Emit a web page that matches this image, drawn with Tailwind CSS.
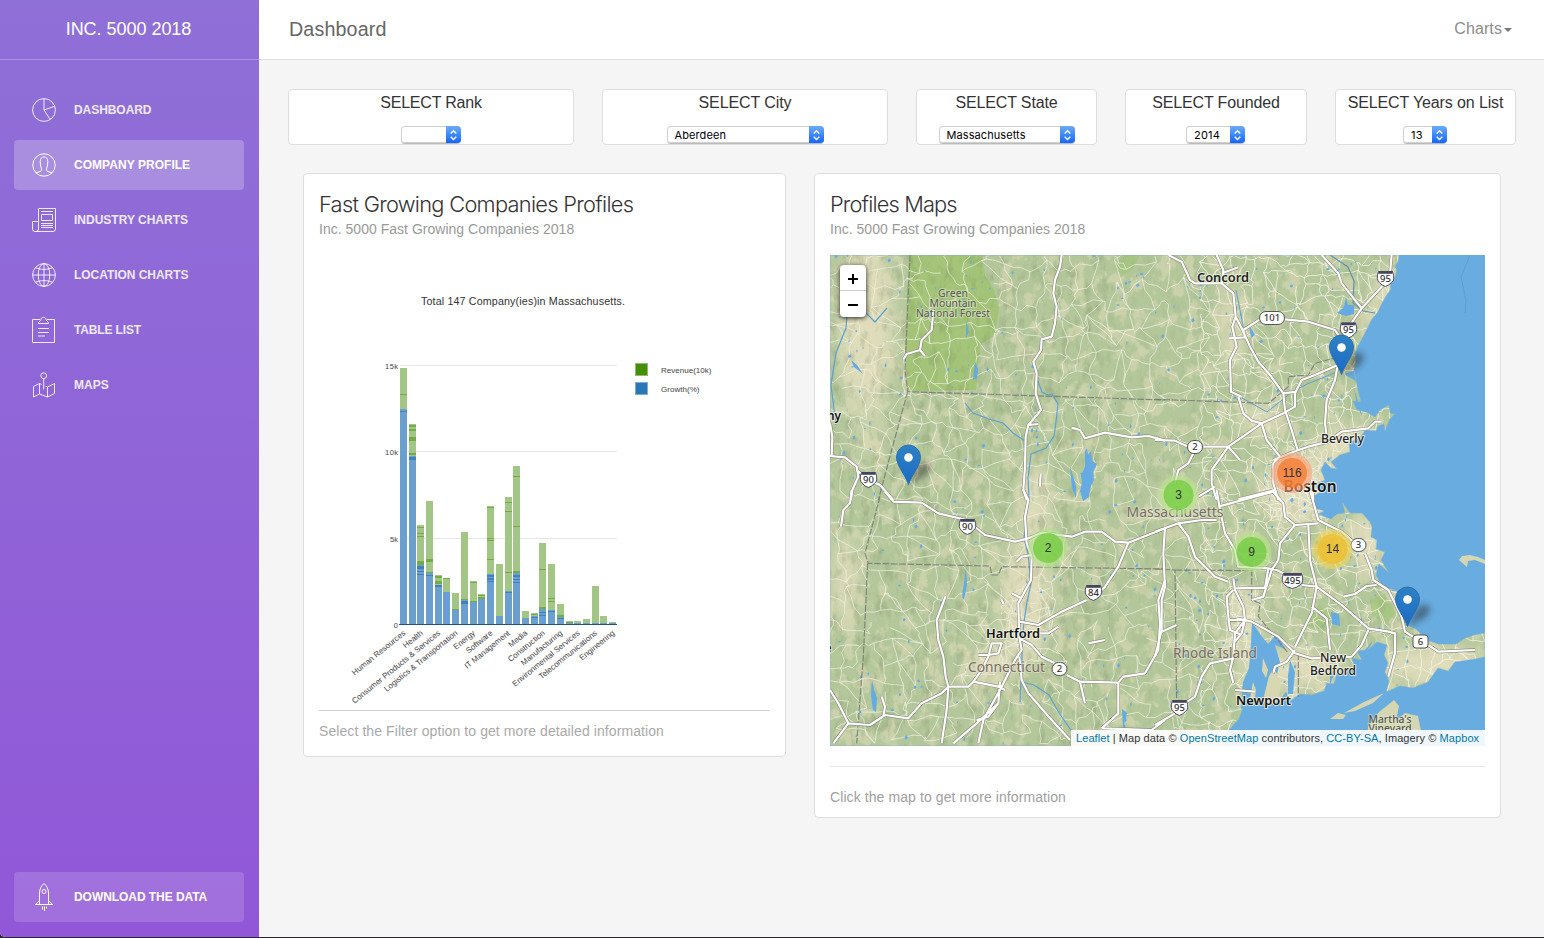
<!DOCTYPE html>
<html lang="en">
<head>
<meta charset="utf-8">
<title>Inc. 5000 2018 Dashboard</title>
<script src="https://cdn.jsdelivr.net/npm/@tailwindcss/browser@4"></script>
</head>
<body class="w-[1544px] h-[938px] overflow-hidden bg-[#2b2630] font-['Liberation_Sans',Arial,sans-serif] text-[#333]">
<div class="flex h-[937px] overflow-hidden rounded-bl-[5px] bg-[#f5f5f5]">

  <aside class="flex w-[259px] shrink-0 flex-col bg-linear-to-b from-[#8f70d7] to-[#9157d8] text-white">
    <div class="flex h-[60px] shrink-0 items-center justify-center border-b border-white/25 pr-[2px] text-[18px] tracking-[-0.030px]">INC. 5000 2018</div>
    <nav class="mt-[25px] flex flex-col gap-[5px] px-[14px] pr-[15px] text-[12px] font-bold">
      <a class="flex h-[50px] items-center rounded-[4px] pl-[17px] tracking-[-0.060px] text-white/85">
        <svg class="mr-[17px] h-[26px] w-[26px]" viewBox="0 0 26 26" fill="none" stroke="currentColor" stroke-width="1"><circle cx="13" cy="13" r="11.4"/><path d="M13 1.5V13l6.3 9.6M13 13l10.8-3.8"/></svg>DASHBOARD</a>
      <a class="flex h-[50px] items-center rounded-[4px] bg-white/23 pl-[17px] tracking-[0.040px] text-white">
        <svg class="mr-[17px] h-[26px] w-[26px]" viewBox="0 0 26 26" fill="none" stroke="currentColor" stroke-width="1"><circle cx="13" cy="13" r="11.2"/><path d="M4.800 20.800l4.300-1.300c1.500-.5 1.700-1.700 1.200-3.400-.8-2-1.200-4-1.100-6.600C9.300 6.400 10.700 4.900 13 4.900s3.700 1.500 3.800 4.600c.1 2.600-.3 4.600-1.100 6.600-.5 1.700-.3 2.900 1.200 3.400l4.300 1.300"/></svg>COMPANY PROFILE</a>
      <a class="flex h-[50px] items-center rounded-[4px] pl-[17px] text-white/85">
        <svg class="mr-[17px] h-[26px] w-[26px]" viewBox="0 0 26 26" fill="none" stroke="currentColor" stroke-width="1"><path d="M7.500 14.500V1.500h17v20.500q0 2.500-2.500 2.500H4q-2.500 0-2.500-2.500v-7.500h6v7.500q0 2.500-2.500 2.500M10 4.500h12M10.500 7.500h11v6h-11zM10 16.500h12M10 18.500h12M10 20.500h12"/></svg>INDUSTRY CHARTS</a>
      <a class="flex h-[50px] items-center rounded-[4px] pl-[17px] tracking-[-0.040px] text-white/85">
        <svg class="mr-[17px] h-[26px] w-[26px]" viewBox="0 0 26 26" fill="none" stroke="currentColor" stroke-width="1"><circle cx="13" cy="13" r="11.400"/><ellipse cx="13" cy="13" rx="5.800" ry="11.400"/><path d="M13 1.500v23M1.500 13h23M4.200 5.500c5 2.500 12.600 2.500 17.600 0M4.200 20.500c5-2.500 12.600-2.500 17.600 0"/></svg>LOCATION CHARTS</a>
      <a class="flex h-[50px] items-center rounded-[4px] pl-[17px] tracking-[-0.150px] text-white/85">
        <svg class="mr-[17px] h-[28px] w-[26px]" viewBox="0 0 26 28" fill="none" stroke="currentColor" stroke-width="1"><path d="M9 3.500H1.500v23h22v-23H16M7.500 7.500h10c0-2-2-2-2.500-4.200C14.700.7 10.300.7 10 3.300c-.5 2.200-2.500 2.200-2.500 4.200zM7 12.500h11M7 16.500h11M7 20h7"/></svg>TABLE LIST</a>
      <a class="flex h-[50px] items-center rounded-[4px] pl-[17px] text-white/85">
        <svg class="mr-[17px] h-[26px] w-[26px]" viewBox="0 0 26 26" fill="none" stroke="currentColor" stroke-width="1"><circle cx="12.700" cy="3.700" r="2.900"/><path d="M12.700 6.600v10.900M10.500 12.500l-2-1-6 3v10.500l6-3 8 3 7-3.500V11.500l-7 3.500-2-.8M8.500 11.500V22M16.500 15v10"/></svg>MAPS</a>
    </nav>
    <div class="mt-auto mb-[15px] ml-[14px] flex h-[50px] w-[230px] items-center rounded-[4px] bg-white/15 pl-[17px] text-[12px] font-bold tracking-[-0.060px]">
      <svg class="mr-[17px] h-[30px] w-[26px]" viewBox="0 0 26 30" fill="none" stroke="currentColor" stroke-width="1"><path d="M8.500 22.500V11c0-4 2-7.500 4.500-9.500 2.500 2 4.500 5.500 4.500 9.500v11.500M8.500 18.500l-4 4h17l-4-4M11.500 24.500v3M13.500 24.500v4.500M15.500 24.500v2"/><circle cx="13" cy="9.500" r="2"/></svg>DOWNLOAD THE DATA</div>
  </aside>

  <main class="flex-1">
    <header class="flex h-[60px] items-center justify-between border-b border-[#e0e0e0] bg-white pr-[32px] pl-[30px]">
      <h1 class="text-[19.700px] tracking-[0.140px] text-[#666]">Dashboard</h1>
      <div class="flex items-center gap-[2px] pb-[2px] text-[16px] tracking-[0.100px] text-[#8c8c8c]"><span>Charts</span><svg class="mt-[3px] h-[4px] w-[8px]" viewBox="0 0 8 4"><path d="M0 0h8L4 4z" fill="#777"/></svg></div>
    </header>

    <section class="mt-[29px] flex gap-[28px] pl-[29px] text-[16px] tracking-[-0.150px] [&>div]:flex [&>div]:h-[56px] [&>div]:flex-col [&>div]:items-center [&>div]:justify-between [&>div]:rounded-[4px] [&>div]:border [&>div]:border-[#dedede] [&>div]:bg-white [&>div]:whitespace-nowrap">
      <div class="w-[286px]"><span class="leading-[26px] tracking-[-0.200px]">SELECT Rank</span>
        <span class="flex h-[18px] w-[60px] justify-end overflow-hidden rounded-[4px] border-b border-[#bbb] shadow-[inset_0_0_0_1px_#d0d0d0]"><svg class="h-[18px] w-[15px]" viewBox="0 0 15 18"><use href="#stepper"/></svg></span></div>
      <div class="w-[286px]"><span class="leading-[26px] tracking-[-0.080px]">SELECT City</span>
        <span class="flex h-[18px] w-[157px] items-center justify-between overflow-hidden rounded-[4px] border-b border-[#bbb] pl-[8px] font-[Inter] text-[11px] tracking-[0.100px] text-black shadow-[inset_0_0_0_1px_#d0d0d0]"><b class="pt-[2px] font-normal">Aberdeen</b><svg class="h-[18px] w-[15px]" viewBox="0 0 15 18"><use href="#stepper"/></svg></span></div>
      <div class="w-[181px]"><span class="leading-[26px]">SELECT State</span>
        <span class="flex h-[18px] w-[136px] items-center justify-between overflow-hidden rounded-[4px] border-b border-[#bbb] pl-[8px] font-[Inter] text-[11px] tracking-[0.080px] text-black shadow-[inset_0_0_0_1px_#d0d0d0]"><b class="pt-[2px] font-normal">Massachusetts</b><svg class="h-[18px] w-[15px]" viewBox="0 0 15 18"><use href="#stepper"/></svg></span></div>
      <div class="w-[182px]"><span class="leading-[26px]">SELECT Founded</span>
        <span class="mr-[1px] flex h-[18px] w-[59px] items-center justify-between overflow-hidden rounded-[4px] border-b border-[#bbb] pl-[8px] font-[Inter] text-[11px] tracking-[0.200px] text-black shadow-[inset_0_0_0_1px_#d0d0d0]"><b class="pt-[2px] font-normal">2014</b><svg class="h-[18px] w-[15px]" viewBox="0 0 15 18"><use href="#stepper"/></svg></span></div>
      <div class="w-[181px]"><span class="leading-[26px] tracking-[-0.120px]">SELECT Years on List</span>
        <span class="mr-[1px] flex h-[18px] w-[44px] items-center justify-between overflow-hidden rounded-[4px] border-b border-[#bbb] pl-[8px] font-[Inter] text-[11px] tracking-[0.200px] text-black shadow-[inset_0_0_0_1px_#d0d0d0]"><b class="pt-[2px] font-normal">13</b><svg class="h-[18px] w-[15px]" viewBox="0 0 15 18"><use href="#stepper"/></svg></span></div>
    </section>

    <section class="mt-[28px] flex items-start gap-[28px] pl-[44px]">
      <article class="flex h-[584px] w-[483px] flex-col rounded-[4px] border border-[#dedede] bg-white px-[15px]">
        <h2 class="mt-[15px] font-[Inter] text-[21.800px] leading-[30px] font-light tracking-[-0.700px] whitespace-nowrap">Fast Growing Companies Profiles</h2>
        <p class="mt-[1px] text-[14px] leading-[18px] tracking-[0.020px] text-[#999]">Inc. 5000 Fast Growing Companies 2018</p>
        <svg id="chart" class="mt-[11px] h-[461px] w-[451px] shrink-0" viewBox="319 249 451 461" font-family="Liberation Sans, Arial, sans-serif">
          <text x="523" y="305" font-size="10.700" text-anchor="middle" textLength="204" fill="#333">Total 147 Company(ies)in Massachusetts.</text>
          <path d="M400 365.500H617M400 451.500H617M400 538.500H617" stroke="#e6e6e6"/>
          <g font-size="7.500" fill="#444" text-anchor="end"><text x="398" y="368.500" textLength="13">15k</text><text x="398" y="455" textLength="13">10k</text><text x="398" y="541.500">5k</text><text x="398" y="628">0</text></g>
          <g id="bars" shape-rendering="crispEdges"></g>
          <path d="M399 624.500H617" stroke="#24517a"/>
          <g id="axis" font-size="8" fill="#444" text-anchor="end"></g>
          <rect x="635.500" y="363.500" width="12" height="12" fill="#438f06" stroke="#8fbc69"/><rect x="635.500" y="382.500" width="12" height="12" fill="#2a77b6" stroke="#7fadd4"/>
          <g font-size="8" fill="#444"><text x="661" y="373" textLength="50.500">Revenue(10k)</text><text x="661" y="392" textLength="38.500">Growth(%)</text></g>
        </svg>
        <div class="border-t border-[#d2d2d2] pt-[11px] text-[14px] leading-[18px] tracking-[0.085px] text-[#a9a9a9]">Select the Filter option to get more detailed information</div>
      </article>

      <article class="flex h-[645px] w-[687px] flex-col rounded-[4px] border border-[#dedede] bg-white px-[15px]">
        <h2 class="mt-[15px] font-[Inter] text-[21.800px] leading-[30px] font-light tracking-[-0.850px] whitespace-nowrap">Profiles Maps</h2>
        <p class="mt-[1px] text-[14px] leading-[18px] tracking-[0.020px] text-[#999]">Inc. 5000 Fast Growing Companies 2018</p>
        <div class="relative mt-[17px] h-[491px] w-[655px] shrink-0 overflow-hidden">
          <svg id="map" class="h-[491px] w-[655px]" viewBox="830 255 655 491" font-family="Noto Sans, sans-serif">
            <defs>
              <linearGradient id="blue" x2="0" y2="1"><stop stop-color="#6cabfb"/><stop offset="1" stop-color="#0e62fb"/></linearGradient>
              <g id="stepper"><rect width="15" height="18" fill="url(#blue)"/><path d="M4.700 7.500l2.800-2.800 2.800 2.800M4.700 10.700l2.800 2.800 2.800-2.800" fill="none" stroke="#fff" stroke-width="1.400"/></g>
              <linearGradient id="pinfill" x2="0" y2="1"><stop stop-color="#2e82c4"/><stop offset="1" stop-color="#1a6ac6"/></linearGradient>
              <filter id="soft" x="-50%" y="-50%" width="200%" height="200%"><feGaussianBlur stdDeviation="9"/></filter>
              <filter id="blur2" x="-50%" y="-50%" width="200%" height="200%"><feGaussianBlur stdDeviation="3"/></filter>
              <filter id="patch" x="0" y="0" width="100%" height="100%" color-interpolation-filters="sRGB"><feTurbulence type="fractalNoise" baseFrequency=".07 .055" numOctaves="5" seed="8"/><feColorMatrix values="0 0 0 0 .89  0 0 0 0 .87  0 0 0 0 .735  7 0 0 0 -3.600"/></filter>
              <filter id="relief" x="0" y="0" width="100%" height="100%" color-interpolation-filters="sRGB"><feTurbulence type="fractalNoise" baseFrequency=".13 .06" numOctaves="4" seed="3"/><feColorMatrix values="0 0 0 0 .42  0 0 0 0 .48  0 0 0 0 .32  0 3 0 0 -1.500"/></filter>
              <path id="coast" d="M830 255H1399L1398 262 1395 266 1397 271 1394 280 1390 283 1391 289 1386 296 1381 305 1378 312 1372 319 1368 327 1364 335 1358 346 1355 354 1356 363 1354 370 1356 381 1361 402 1353 401 1357 410 1366 412 1375 417 1380 410 1389 405 1390 413 1395 414 1390 419 1385 431 1384 424 1378 426 1376 431 1366 430 1359 438 1349 443 1350 452 1340 455 1331 462 1337 469 1331 468 1325 462 1321 470 1325 480 1315 484 1320 492 1311 498 1314 508 1324 511 1318 514 1331 519 1337 514 1345 513 1342 502 1350 513 1362 513 1370 522 1372 527 1371 537 1377 540 1376 549 1385 552 1381 560 1389 573 1379 564 1376 575 1382 586 1391 589 1397 591 1397 601 1402 611 1407 625 1416 629 1427 640 1438 644 1456 644 1465 638 1474 635 1485 633V657L1475 659 1455 662 1448 671 1438 668 1428 682 1413 688 1400 686 1386 692 1389 681 1385 672 1388 663 1384 655 1387 645 1377 642 1368 650 1372 642 1365 650 1357 651 1362 660 1352 658 1356 671 1345 668 1342 674 1337 674 1334 684 1327 683 1324 691 1312 695 1300 694 1290 701 1286 692 1279 701 1264 706 1257 700 1243 708 1239 719 1227 732 1223 746H830Z"/>
              <clipPath id="land"><use href="#coast"/></clipPath>
              <g id="roads">
                <g transform="translate(825 250) scale(.33333)">
                  <path d="M710 15L705 50 690 90 685 130 695 170 690 220 680 260 650 268 648 300 625 335 635 370 632 430 648 480 610 525 602 560 600 650 595 720 605 750M740 533L765 540 780 565 840 548 920 562 970 558 1020 572M15 618L60 622 95 650 100 680 82 720 78 750M95 660L130 690 165 705 205 750M15 520L22 560 20 618M325 180L320 240 290 270 285 300 245 312 235 328M285 300L300 318M610 525L640 522M647 672L645 710"/>
                </g>
                <g transform="translate(1155 250) scale(.33333)">
                  <path d="M40 15L80 35 105 90 120 100 200 100 235 130 242 200M185 15L205 60 200 100M205 68L250 52M242 200L260 235 285 290 310 335 345 375 385 430 390 480 410 540 428 600M242 200L232 230 245 290 225 330 228 425 260 440M250 440L265 490 290 512 320 520M222 265L270 262 265 240 315 208M390 208L460 215 540 240 560 270M710 15L705 70M690 100L620 175 585 225M500 15L550 70 560 100 600 150 620 175M548 345L540 390 515 450 510 520 515 560M548 345L480 375 440 390 420 430 420 470 385 490 320 520 220 590 170 660 170 700 185 750M385 430L425 425M320 520L335 570 375 620 355 640 355 700 370 750M0 570L60 572 100 590M145 590L220 590 255 630M355 630L430 600 460 590 520 575 560 545 640 535 660 515 680 515M120 600L100 640 70 660 60 700M130 740L180 710M250 748L360 720M470 690L475 750"/>
                </g>
                <g transform="translate(825 490) scale(.33333)">
                  <path d="M180 5L205 35 290 38 340 70 425 90 480 135 570 155 610 145 650 128 740 140 780 125 830 125 870 155 910 158 1020 115M595 0L610 30 600 80 605 160 620 200 618 270 580 340 583 440 590 480 570 510 530 590 475 690 460 760M80 0L75 40 55 60 48 110M910 158L880 230 840 290 820 310M785 330L710 365 640 405 583 395M460 495L490 495 520 490 530 460 500 460 490 500 470 540 445 575M385 760L455 700 520 640 525 575M362 318L335 390 340 450 355 500 362 560 370 590 365 660 350 760M15 600L40 640 70 700 25 760M70 700L135 705 180 675 250 685 290 640 350 610 370 590 430 590 445 575 520 590 540 600M170 620L180 650 175 680M583 445L620 465 650 500 690 520M725 555L765 575 880 578 895 560 960 550 1000 480 1005 400 1000 330 1020 270M765 575L780 640M880 578L880 670 830 715M583 500L590 570 610 610 680 690 735 750M640 430L670 430 700 410M575 215L590 200 620 195M790 460L840 450M455 690L490 680 520 640M560 310L590 325M530 330L536 342M835 715L980 720 1020 690"/>
                </g>
                <g transform="translate(1155 490) scale(.33333)">
                  <path d="M0 125L70 100 140 90 185 90M190 50L280 25 355 5M185 0L195 60 210 130 240 180 250 230 340 235 365 240 385 250M70 100L100 140 120 200 180 260 220 275M30 110L25 190 30 290 20 330 20 420 0 500M20 425L65 405M350 0L385 40 390 80 420 105 375 160 370 210 350 240 325 320 290 330M420 105L490 100M465 0L490 90 560 125 600 160M630 190L650 240 655 270 700 300 740 380 750 425 790 450M460 105L465 210 485 290 560 345 640 415 700 425 720 430 720 490 700 560M485 290L470 370 440 430 420 470M440 285L485 290M565 320L600 312 635 288 665 285M640 420L620 465 590 500 470 505 420 490 370 440 290 395 270 390 245 385M470 350L515 385 525 480M235 265L240 300 265 350 270 390 240 430 235 500 225 540 235 580M235 300L215 320 220 380 225 420 260 435M220 390L270 390 260 430 240 455M240 295L330 293 340 235M235 505L165 520 140 560 120 620 75 650M60 670L0 705M240 600L300 605M420 480L395 515 360 530 355 550M820 465L850 485 960 480"/>
                </g>
              </g>
            </defs>
            <rect x="830" y="255" width="655" height="491" fill="#68ace0"/>
            <path d="M1470 255l-9 22 5 24-1 12" fill="none" stroke="#5b9fd5"/>
            <g clip-path="url(#land)">
              <rect x="830" y="255" width="655" height="491" fill="#b3c79b"/>
              <g fill="#e4dfbf" filter="url(#soft)" opacity=".9">
                <ellipse cx="866" cy="325" rx="28" ry="85"/><ellipse cx="1026" cy="600" rx="26" ry="62"/><ellipse cx="990" cy="665" rx="26" ry="20"/><ellipse cx="845" cy="580" rx="12" ry="45"/><ellipse cx="1035" cy="505" rx="15" ry="45"/>
                <ellipse cx="1300" cy="490" rx="42" ry="36"/><ellipse cx="1385" cy="330" rx="16" ry="65"/><ellipse cx="1352" cy="445" rx="40" ry="20"/><ellipse cx="1430" cy="665" rx="60" ry="18"/><ellipse cx="1245" cy="625" rx="16" ry="42"/><ellipse cx="1290" cy="670" rx="50" ry="20"/><ellipse cx="1232" cy="330" rx="11" ry="45"/><ellipse cx="1260" cy="420" rx="22" ry="18"/><ellipse cx="1180" cy="500" rx="22" ry="16"/><ellipse cx="1370" cy="540" rx="24" ry="30"/><ellipse cx="870" cy="430" rx="20" ry="30" opacity=".5"/>
              </g>
              <rect x="830" y="255" width="655" height="491" filter="url(#patch)" opacity=".5"/>
              <path d="M909 255H982L985 275 994 290 999 308 995 335 980 345 976 390 907 391 905 345Z" fill="#a0c372" opacity=".85"/>
              <path d="M1115 265l10-10h15l-8 15-12 8zM1305 625l14-20 14 8-8 18zM1370 600l14-6 12 18-9 12-15-9z" fill="#a3c47a" opacity=".7"/>
              <rect x="830" y="255" width="280" height="491" filter="url(#relief)" opacity=".24"/>
              <rect x="1110" y="255" width="295" height="491" filter="url(#relief)" opacity=".1"/>
              <g id="minor" fill="none" stroke="#f3f2e4"></g>
              <g id="ponds" fill="#65aae2"></g>
              <g fill="none" stroke="#5fa0cf" stroke-width="1.200">
                <path d="M1062 257l-3 14-5 13 0 8 3 16-1 14-5 14-10 6-1 10-7 10 3 14 6 16 6 3 4-1 6 10-2 18-2 14-8 12-15 6-3 24 1 20-3 20-2 20 4 16 3 30-4 18-3 20-2 20 0 20-2 40"/>
                <path d="M848 300l-2 28-10 25-5 32 5 40M865 312l10 10 12-14"/><path d="M1236 290l5 25 4 23M1242 398l25 14 25-20 15-8 30-12" stroke-width="1"/>
                <path d="M1330 255l18 12 6 14-1 22 10 8 12 2" stroke="#6391b0"/>
                <path d="M1022 682l12 3 15 10 10 18 14 20"/><path d="M965 403l8 10 16 6 14 4 10 10 12 8"/>
              </g>
              <path d="M1085 451l2-3 1 7 3-4 1 10 5 3-4 8 1 8-4 8-1 9-6 4-3-10 2-8-1-8 4-8zM1070 466l3 10 3 10 0 12-4-10zM975 361l3 8-1 9-4 2zM966 320l3 12-3 6zM851 360l6 5 6 9-9-7zM966 568l-4 29 2 3 3-15zM872 680l2 10 3 8-1 14-3-2-2-14zM1346 297l2 8 6 0 0 9-8 2-9-3 7-6zM1249 325l6 10-4 3zM1331 612l8 2 1 12-8-2zM1122 709l5 4-4 16z" fill="#65aae2"/>
              <path d="M1252 622l-1 22-2 24-6 14-2 27 28-3 5-20 6-24-5-17 10 4-8-15-9 10-8-10zM1290 660l5 12-2 22h-5v-18zM1330 663l4 12-4 9zM1344 374l10-3 2 10zM1354 388l6 20 2 8-5-10z" fill="#68ace0"/>
              <path d="M1274 668l7 14-2 16-11 8-4-10 5-20zM1263 658l5 12-2 8-4-7zM1253 682l3 8-2 14-4-6z" fill="#d7d8b1"/>
            </g>
            <g fill="#d5d7b2">
              <path d="M1330 719l8-6 8 2-3 4zM1344 713l20-11 20-9-11 10-18 8zM1368 727l11-15 15-12 5 6-3 15 9-8 13 3 3 15H1368zM1459 560l3-4 8-1 8 2 7 3v4l-10-4-7 1-1 6z"/>
            </g>
            <use href="#coast" fill="none" stroke="#7db0cf" stroke-width=".6"/>
            <g fill="none" stroke="#777" stroke-opacity=".85" stroke-width="3.500" stroke-dasharray="20 5">
              <g transform="translate(825 250) scale(.33333)"><path d="M255 15L240 360 248 425 1020 450M248 425L200 600 160 750"/></g>
              <g transform="translate(1155 250) scale(.33333)"><path d="M0 448L340 460 400 410 400 380 460 375 480 340 535 325"/></g>
              <g transform="translate(825 490) scale(.33333)"><path d="M165 20L120 190 130 220 495 228 500 255 520 255 530 230 1020 237M128 220L115 500 95 760"/></g>
              <g transform="translate(1155 490) scale(.33333)"><path d="M0 237L60 240 65 640M62 240L290 242 290 330 315 340 310 380 360 440 400 490M430 490L430 620"/></g>
            </g>
            <use href="#roads" fill="none" stroke="#8a877b" stroke-width="10" stroke-linejoin="round"/>
            <use href="#roads" fill="none" stroke="#fff" stroke-width="6.500" stroke-linejoin="round"/>

            <g id="shields"></g>
            <g id="places" paint-order="stroke" stroke-linejoin="round" text-anchor="middle"></g>
            <g id="clusters" font-family="Liberation Sans, Arial, sans-serif" font-size="12" text-anchor="middle"></g>
            <g id="pins"></g>
          </svg>
          <div class="absolute top-[10px] left-[10px] flex w-[26px] flex-col overflow-hidden rounded-[4px] bg-white shadow-[0_1px_5px_rgba(0,0,0,0.850)]">
            <span class="flex h-[26px] items-center justify-center border-b border-[#ccc] pt-[3px]"><svg class="h-[12px] w-[12px]" viewBox="0 0 12 12"><path d="M1 6h10M6 1v10" stroke="#000" stroke-width="2"/></svg></span>
            <span class="flex h-[26px] items-center justify-center pt-[2px]"><svg class="h-[12px] w-[12px]" viewBox="0 0 12 12"><path d="M1 6h10" stroke="#000" stroke-width="2"/></svg></span>
          </div>
          <div class="absolute right-0 bottom-0 h-[16px] w-[414px] bg-white/90 pl-[5px] text-[11px] leading-[16px] tracking-[0.080px] whitespace-nowrap [&>a]:text-[#0078a8]"><a>Leaflet</a> | Map data © <a>OpenStreetMap</a> contributors, <a>CC-BY-SA</a>, Imagery © <a>Mapbox</a></div>
        </div>
        <div class="mt-[20px] border-t border-[#e6e6e6] pt-[21px] text-[14px] leading-[18px] tracking-[0.090px] text-[#a0a0a0]">Click the map to get more information</div>
      </article>
    </section>
  </main>
</div>

<script>
const NS='http://www.w3.org/2000/svg';
function add(id,tag,attrs,text){const e=document.createElementNS(NS,tag);for(const k in attrs)e.setAttribute(k,attrs[k]);if(text!==undefined)e.textContent=text;document.getElementById(id).appendChild(e);return e;}

// Stacked bars: x, revenue top, growth top, revenue bands, growth bands ([y, height])
const bars=[
[400,368,409,[[394,1]],[[411,1]]],[409,424,456,[[425,2],[429,2],[437,4],[453,2]],[[457,3]]],
[417,525,565,[[527,1],[533,1],[536,1],[561,4]],[[566,3],[571,1],[574,1]]],[426,501,573,[[559,3],[572,1]],[[575,1]]],
[435,575,585,[[576,2],[581,3]],[[585,2]]],[443,578,592,[[578,1]],[]],[452,593,610,[[609,1]],[]],[461,532,600,[[599,1]],[[601,3]]],
[470,581,602,[[582,1],[601,1]],[]],[478,594,599,[[595,1],[597,2]],[]],[487,506,574,[[507,1],[538,1],[540,1],[559,1]],[[575,2],[578,2],[581,1]]],
[496,564,616,[],[]],[505,497,591,[[502,1],[511,1],[572,1]],[[592,1]]],[513,466,572,[[476,1],[526,1],[571,2]],[[575,2],[579,1],[582,1]]],
[522,611,618,[],[]],[531,613,616,[[614,1]],[[617,1]]],[539,543,609,[[569,1],[607,2]],[[612,1],[615,1]]],[548,564,610,[[598,1],[601,1]],[[611,1]]],
[557,604,617,[[615,2]],[[618,1]]],[566,621,622,[[622,1]],[]],[574,621,623,[],[]],[583,619,623,[],[]],[592,586,623,[],[]],[600,616,623,[],[]],[609,622,623,[],[]]];
for(const [x,g,b,gs,bs] of bars){
  const w=x===417||x===505?6.500:7;
  add('bars','rect',{x,y:g,width:w,height:b-g,fill:'#a3c585'});
  add('bars','rect',{x,y:b,width:w,height:625-b,fill:'#6a9fce'});
  for(const [y,h] of gs)add('bars','rect',{x,y,width:w,height:h,fill:'#73ab46'});
  for(const [y,h] of bs)add('bars','rect',{x,y,width:w,height:h,fill:'#3f82bf'});
}
const labels=['Human Resources','Health','Consumer Products & Services','Logistics & Transportation','Energy','Software','IT Management','Media','Construction','Manufacturing','Environmental Services','Telecommunications','Engineering'];
labels.forEach((t,i)=>add('axis','text',{transform:`translate(${406+i*17.430} 634) rotate(-39)`},t));

// Minor road network on a jittered lattice
let seed=41;const rnd=()=>(seed=(seed*16807)%2147483647)/2147483647;
function net(x0,y0,x1,y1,s,p,w,o){
  const pts=[];for(let y=y0;y<=y1;y+=s){const r=[];for(let x=x0;x<=x1;x+=s)r.push([x+(rnd()-.5)*s*.950,y+(rnd()-.5)*s*.950]);pts.push(r);}
  let d='';const seg=(a,b)=>{const j=()=>(rnd()-.5)*s*.300;const q=(t)=>(a[0]+(b[0]-a[0])*t+j()).toFixed(1)+' '+(a[1]+(b[1]-a[1])*t+j()).toFixed(1);
    d+=`M${a[0].toFixed(1)} ${a[1].toFixed(1)}L${q(.3)} ${q(.65)} ${b[0].toFixed(1)} ${b[1].toFixed(1)}`;};
  for(let i=0;i<pts.length;i++)for(let k=0;k<pts[0].length;k++){
    if(k+1<pts[0].length&&rnd()<p)seg(pts[i][k],pts[i][k+1]);
    if(i+1<pts.length&&rnd()<p)seg(pts[i][k],pts[i+1][k]);
    if(i+1<pts.length&&k+1<pts[0].length&&rnd()<p*.250)seg(pts[i][k],pts[i+1][k+1]);}
  add('minor','path',{d,'stroke-width':w,opacity:o});
}
net(825,250,1210,750,18,.740,.85,.8);
net(1205,250,1490,750,12.500,.740,.9,.9);
net(1265,445,1330,525,7,.700,.8,.8);
net(1225,590,1260,650,7,.700,.8,.7);
net(1000,590,1050,665,10,.600,.8,.7);
let pd='';for(let i=0;i<420;i++){const x=(i%2?1190+rnd()*240:830+rnd()*380),y=255+rnd()*490,a=.5+rnd()*1.600,b=.6+rnd()*2.200;
  pd+=`M${x.toFixed(1)} ${y.toFixed(1)}l${a.toFixed(1)} ${(-b*.5).toFixed(1)} ${(a*.6).toFixed(1)} ${b.toFixed(1)} ${(-a).toFixed(1)} ${(b*.7).toFixed(1)} ${(-a*.7).toFixed(1)} ${(-b*.5).toFixed(1)}z`;}
add('ponds','path',{d:pd});

// Route shields
for(const [x,y,t,k] of [[1385.500,278.500,'95','i'],[1348.500,330,'95','i'],[868.500,479.500,'90','i'],[967.500,526.500,'90','i'],[1093.500,592.500,'84','i'],[1292.500,580.500,'495','i'],[1179.500,707.500,'95','i'],[1272,318,'101','o'],[1195,447,'2','o'],[1059.500,669,'2','o'],[1358.500,545,'3','o'],[1420.500,641.500,'6','u']]){
  if(k==='i'){const w=t.length>2?10:8;
    add('shields','path',{d:`M${x-w+1} ${y-7}h${2*w-2}q3 8-1 11-3 3-${w-2} 4-${w-4}-1-${w-2}-4-4-3-1-11z`,fill:'#fff',stroke:'#4a4a63','stroke-width':1});
    add('shields','path',{d:`M${x-w+1} ${y-6}h${2*w-2}`,stroke:'#44445f','stroke-width':2.600});
  }else{const w=t.length>2?12.500:7.500;add('shields','rect',{x:x-w,y:y-6.500,width:2*w,height:13,rx:k==='u'?3:6.500,fill:'#fff',stroke:'#555'});}
  add('shields','text',{x,y:y+3.400,'font-size':9.500,'text-anchor':'middle',fill:'#333','font-weight':500},t);
}
// Place labels: x, baseline, text, size, weight, fill, rendered width
for(const [x,y,t,s,w,f,l] of [[1223,281.500,'Concord',13,600,'#222',52],[1342.500,442.500,'Beverly',12.500,500,'#222',43],[1310,492,'Boston',15.500,600,'#111',53],[1013,637.500,'Hartford',13,600,'#111',54],[1263.500,704.500,'Newport',13,600,'#111',55],
 [1333,662,'New',12,500,'#222',26],[1333,674.500,'Bedford',12,500,'#222',46],[953,297,'Green',10,400,'#555',30],[953,306.500,'Mountain',10,400,'#555',47],[953,316.500,'National Forest',10,400,'#555',74],
 [1175,517,'Massachusetts',13.500,400,'#7b6b62',97],[1006.500,671.500,'Connecticut',13.500,400,'#7b6b62',77],[1215,657.500,'Rhode Island',13.500,400,'#7b6b62',84],[1390,722.500,"Martha's",10.500,500,'#555',43],[1390,732,'Vineyard',10.500,500,'#555',43],[834,420,'ny',13,600,'#111',14],[828.500,652,'e',12,600,'#111',6]])
  add('places','text',{x,y,'font-size':s,'font-weight':w,fill:f,stroke:f==='#7b6b62'?'rgba(230,235,215,.55)':s<=10.5?'rgba(230,238,210,.5)':'rgba(245,247,235,.8)','stroke-width':2,textLength:l,lengthAdjust:'spacingAndGlyphs'},t);
// Marker clusters
for(const [x,y,t,o,i] of [[1048,548,2,'#b5e28c','#6ecc39'],[1178.500,495,3,'#b5e28c','#6ecc39'],[1251.500,552,9,'#b5e28c','#6ecc39'],[1332.500,549,14,'#f1d357','#f0c20c'],[1292,473,116,'#fd9c73','#f18017']]){
  add('clusters','circle',{cx:x,cy:y,r:20,fill:o,opacity:.6});
  add('clusters','circle',{cx:x,cy:y,r:15,fill:t===116?'#f5792a':t===14?'#f0bd24':i,opacity:.72});
  add('clusters','text',{x,y:y+4,fill:'#333'},t);
}
// Location pins, anchored at the tip
for(const [x,y] of [[908.500,485],[1341.500,375],[1407.500,627]]){
  add('pins','path',{d:`M${x} ${y}l10-20 8-3 5 4-4 9z`,fill:'#222',opacity:.45,filter:'url(#blur2)'});
  add('pins','path',{d:`M${x} ${y-.5}C${x-3} ${y-10} ${x-12} ${y-19} ${x-12} ${y-28}a12 12 0 0 1 24 0c0 9-9 18-12 27.500z`,fill:'url(#pinfill)',stroke:'#2a6caa','stroke-width':.900});
  add('pins','circle',{cx:x,cy:y-27.500,r:4.300,fill:'#fff'});
}
</script>
</body>
</html>
